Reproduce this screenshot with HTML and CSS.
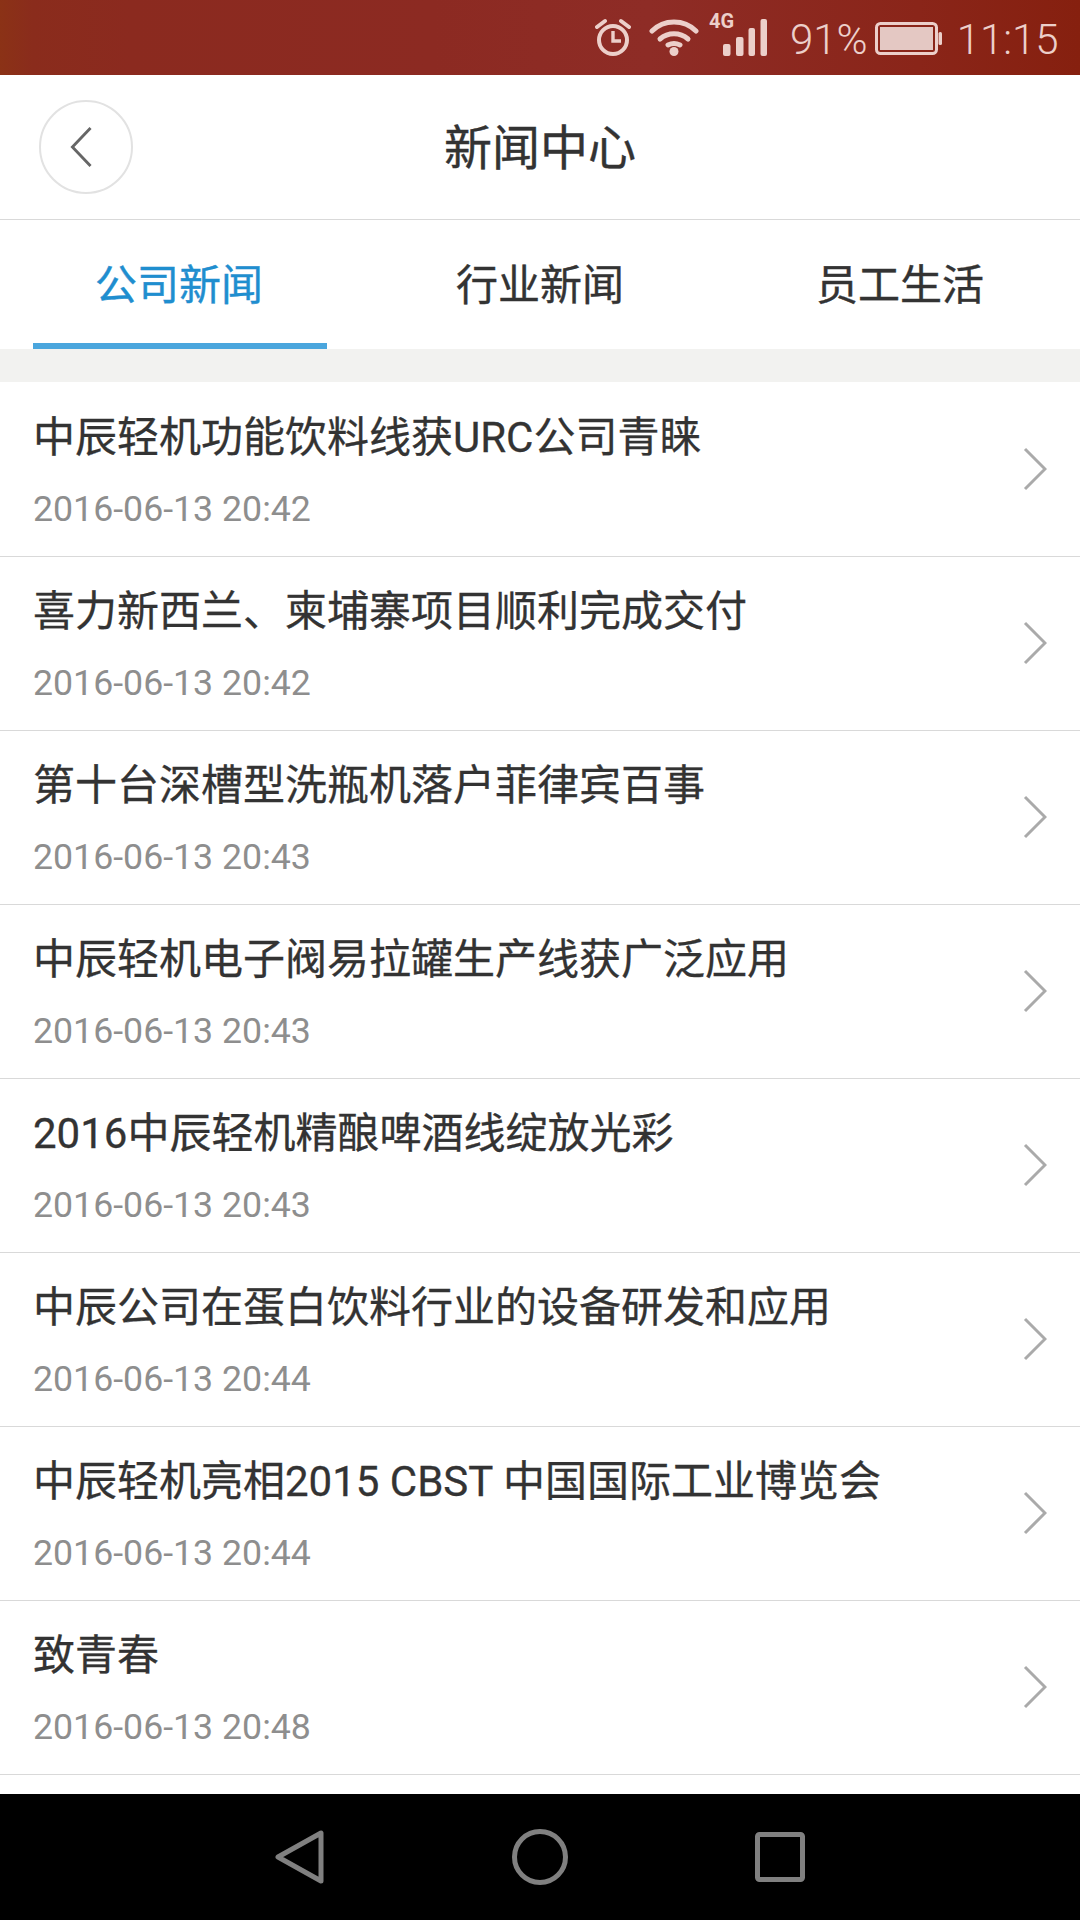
FILE: index.html
```html
<!DOCTYPE html>
<html lang="zh">
<head>
<meta charset="utf-8">
<title>新闻中心</title>
<link rel="stylesheet" href="styles.css">
</head>
<body>
<div class="screen">
  <div class="status">
    <svg class="i-alarm" viewBox="0 0 36 38" fill="none" stroke="#eccfca" stroke-width="4"><circle cx="18" cy="22" r="14"/><path d="M18 13v10h8" stroke-width="3.400"/><path d="M2 9l8-6M34 9l-8-6" stroke-linecap="round"/></svg>
    <svg class="i-wifi" viewBox="0 0 50 38" fill="none" stroke="#eccfca" stroke-width="5" stroke-linecap="round"><path d="M3 13C15 1 35 1 47 13"/><path d="M11 21c8-7 20-7 28 0"/><path d="M19 27c4-2 8-2 12 0"/><circle cx="25" cy="33.500" r="4.500" fill="#eccfca" stroke="none"/></svg>
    <div class="signal">
      <span class="net">4G</span>
      <svg class="i-bars" viewBox="0 0 44 37" fill="#eccfca"><rect x="0" y="25" width="7.500" height="12" rx="2"/><rect x="13" y="18" width="7.500" height="19" rx="2"/><rect x="25.500" y="9" width="6.500" height="28" rx="2"/><rect x="37.500" y="0" width="6.500" height="37" rx="2"/></svg>
    </div>
    <span class="pct">91%</span>
    <svg class="i-batt" viewBox="0 0 67 33" fill="none"><rect x="1.500" y="1.500" width="60" height="30" rx="4" stroke="#eccfca" stroke-width="3"/><rect x="5" y="5" width="53" height="23" fill="#e4c8c3"/><rect x="63.500" y="10" width="3.500" height="13" rx="1.500" fill="#eccfca"/></svg>
    <span class="time">11:15</span>
  </div>

  <header class="head">
    <button class="back" type="button" aria-label="返回">
      <svg viewBox="0 0 24 44" fill="none" stroke="#666" stroke-width="3"><path d="M22 2L3 22l19 20"/></svg>
    </button>
    <h1 class="title">新闻中心</h1>
  </header>

  <nav class="tabs">
    <a class="tab active"><span>公司新闻</span><i class="bar"></i></a>
    <a class="tab"><span>行业新闻</span></a>
    <a class="tab"><span>员工生活</span></a>
  </nav>

  <ul class="list">
    <li class="row"><div class="body"><p class="t">中辰轻机功能饮料线获URC公司青睐</p><p class="d">2016-06-13 20:42</p></div><svg class="chev" viewBox="0 0 24 44" fill="none" stroke="#aaa" stroke-width="3"><path d="M2 2l20 20L2 42"/></svg></li>
    <li class="row"><div class="body"><p class="t">喜力新西兰、柬埔寨项目顺利完成交付</p><p class="d">2016-06-13 20:42</p></div><svg class="chev" viewBox="0 0 24 44" fill="none" stroke="#aaa" stroke-width="3"><path d="M2 2l20 20L2 42"/></svg></li>
    <li class="row"><div class="body"><p class="t">第十台深槽型洗瓶机落户菲律宾百事</p><p class="d">2016-06-13 20:43</p></div><svg class="chev" viewBox="0 0 24 44" fill="none" stroke="#aaa" stroke-width="3"><path d="M2 2l20 20L2 42"/></svg></li>
    <li class="row"><div class="body"><p class="t">中辰轻机电子阀易拉罐生产线获广泛应用</p><p class="d">2016-06-13 20:43</p></div><svg class="chev" viewBox="0 0 24 44" fill="none" stroke="#aaa" stroke-width="3"><path d="M2 2l20 20L2 42"/></svg></li>
    <li class="row"><div class="body"><p class="t">2016中辰轻机精酿啤酒线绽放光彩</p><p class="d">2016-06-13 20:43</p></div><svg class="chev" viewBox="0 0 24 44" fill="none" stroke="#aaa" stroke-width="3"><path d="M2 2l20 20L2 42"/></svg></li>
    <li class="row"><div class="body"><p class="t">中辰公司在蛋白饮料行业的设备研发和应用</p><p class="d">2016-06-13 20:44</p></div><svg class="chev" viewBox="0 0 24 44" fill="none" stroke="#aaa" stroke-width="3"><path d="M2 2l20 20L2 42"/></svg></li>
    <li class="row"><div class="body"><p class="t">中辰轻机亮相2015 CBST 中国国际工业博览会</p><p class="d">2016-06-13 20:44</p></div><svg class="chev" viewBox="0 0 24 44" fill="none" stroke="#aaa" stroke-width="3"><path d="M2 2l20 20L2 42"/></svg></li>
    <li class="row"><div class="body"><p class="t">致青春</p><p class="d">2016-06-13 20:48</p></div><svg class="chev" viewBox="0 0 24 44" fill="none" stroke="#aaa" stroke-width="3"><path d="M2 2l20 20L2 42"/></svg></li>
  </ul>

  <div class="nav">
    <svg class="n-back" viewBox="0 0 49 54" fill="none" stroke="#808080" stroke-width="5" stroke-linejoin="round"><path d="M46 3v48L3 27z"/></svg>
    <svg class="n-home" viewBox="0 0 56 56" fill="none" stroke="#808080" stroke-width="5"><circle cx="28" cy="28" r="25.500"/></svg>
    <svg class="n-rec" viewBox="0 0 50 50" fill="none" stroke="#808080" stroke-width="5" stroke-linejoin="round"><rect x="2.500" y="2.500" width="45" height="45" rx="2"/></svg>
  </div>
</div>
</body>
</html>
```
FILE: styles.css
```css
* { box-sizing: border-box; }
html, body { margin: 0; padding: 0; }
body { background: #fff; font-family: Roboto, "Noto Sans CJK SC", sans-serif; }
.screen { width: 1080px; height: 1920px; display: flex; flex-direction: column; overflow: hidden; }

.status {
  height: 75px; flex: none; display: flex; align-items: flex-start;
  background: linear-gradient(90deg, #8b3216 0%, #8a2c1c 3%, #8b2a1f 12%, #8c2a22 40%, #8e2c26 60%, #8a2519 85%, #86200f 100%);
  color: #eccfca; padding-left: 595px;
}
.i-alarm { width: 36px; height: 38px; margin-top: 18px; flex: none; }
.i-wifi { width: 50px; height: 38px; margin: 18px 0 0 18px; flex: none; }
.signal { position: relative; width: 58px; height: 75px; margin-left: 10px; flex: none; }
.net { position: absolute; left: 0; top: 12px; font-size: 20px; font-weight: 700; line-height: 18px; }
.i-bars { position: absolute; left: 14px; top: 19px; width: 44px; height: 37px; }
.pct { margin-left: 23px; font-size: 42px; font-weight: 300; line-height: 79px; flex: none; }
.i-batt { width: 67px; height: 33px; margin: 22px 0 0 7px; flex: none; }
.time { margin-left: 15px; font-size: 42px; font-weight: 300; line-height: 79px; flex: none; }

.head {
  height: 145px; flex: none; display: grid; grid-template-columns: 1fr auto 1fr; align-items: center;
  border-bottom: 1px solid #d9d9d9; padding-left: 39px;
}
.back {
  width: 94px; height: 94px; border-radius: 50%; border: 2px solid #e2e2e2; background: #fff;
  padding: 0; display: flex; align-items: center; justify-content: center; justify-self: start;
}
.back svg { width: 24px; height: 42px; margin-right: 10px; }
.title { margin: 3px 0 0 -39px; font-size: 48px; font-weight: 400; color: #333; line-height: 60px; -webkit-text-stroke: 0.4px #333; }

.tabs { height: 129px; flex: none; display: grid; grid-template-columns: repeat(3, 1fr); }
.tab { position: relative; display: flex; justify-content: center; padding-top: 38px; font-size: 42px; line-height: 56px; color: #333; -webkit-text-stroke: 0.4px currentColor; }
.tab.active { color: #1f8ecf; padding-right: 2px; }
.bar { position: absolute; left: 33px; bottom: 0; width: 294px; height: 6px; background: #4aa6dd; }

.list { list-style: none; margin: 0; padding: 1px 0 0; flex: 1; border-top: 33px solid #f2f2f0; }
.row { height: 174px; display: flex; align-items: center; justify-content: space-between; border-bottom: 1px solid #d9d9d9; padding: 0 33px; }
.body { min-width: 0; }
.t { margin: 0; font-size: 42px; line-height: 56px; color: #333; white-space: nowrap; -webkit-text-stroke: 0.3px #333; }
.d { margin: 23px 0 0; font-size: 35.7px; line-height: 40px; color: #8e8e8e; }
.chev { width: 24px; height: 44px; flex: none; margin-top: -2px; }

.nav { height: 126px; flex: none; background: #000; display: flex; align-items: center; padding-left: 275px; }
.n-back { width: 49px; height: 54px; flex: none; }
.n-home { width: 56px; height: 56px; margin-left: 188px; flex: none; }
.n-rec { width: 50px; height: 50px; margin-left: 187px; flex: none; }
```
